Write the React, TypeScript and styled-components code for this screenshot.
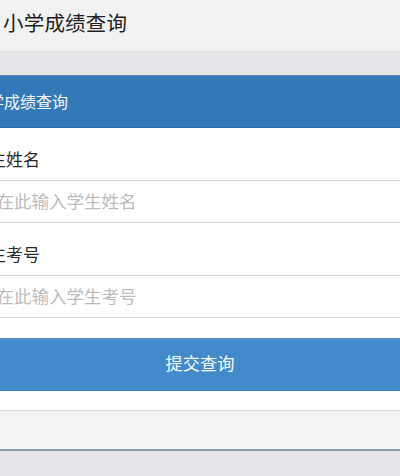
import { createGlobalStyle } from 'styled-components';
import styled from 'styled-components';

const GlobalStyle = createGlobalStyle`
  html, body {
    margin: 0;
    padding: 0;
    background: #e4e6ea;
    overflow: hidden;
  }
  body {
    font-family: "Noto Sans CJK SC", "Noto Sans", sans-serif;
  }
`;

const Page = styled.div`
  width: 400px;
  height: 476px;
  display: flex;
  flex-direction: column;
  background: #e4e6ea;
  overflow: hidden;
`;

const TopBar = styled.header`
  height: 52px;
  background: #f2f2f2;
  display: flex;
  align-items: center;
  padding-left: 3px;
  padding-bottom: 8px;
  box-sizing: border-box;
  border-bottom: 1px solid #e8e8e8;
`;

const Title = styled.h1`
  margin: 0;
  font-size: 20.5px;
  font-weight: 400;
  color: #222;
  letter-spacing: 0.2px;
`;

const Band = styled.div`
  height: 22px;
  background: #e4e6ea;
  box-sizing: border-box;
  border-bottom: 1px solid #efe6e4;
  margin-bottom: 1px;
`;

// the whole form is shifted left, as in the cropped screenshot
const Panel = styled.section`
  display: flex;
  flex-direction: column;
  background: #fff;
  margin-left: -28px;
`;

const PanelHeading = styled.div`
  height: 53px;
  background: #3479b7;
  border-top: 1px solid #5786b3;
  border-bottom: 1px solid #2f6ca3;
  box-sizing: border-box;
  display: flex;
  align-items: center;
  color: #f4f8fc;
  font-size: 16px;
  padding-bottom: 1px;
`;

const Label = styled.label`
  height: 53px;
  box-sizing: border-box;
  padding-top: 19px;
  font-size: 17px;
  line-height: 24px;
  color: #2a2a2a;
  border-bottom: 1px solid #d6d6d6;
`;

const Field = styled.input`
  all: unset;
  height: 42px;
  box-sizing: border-box;
  padding: 0 0 3px 7px;
  font-size: 17.5px;
  line-height: 38px;
  font-family: "Noto Sans CJK SC", "Noto Sans", sans-serif;
  color: #333;
  border-bottom: 1px solid #d6d6d6;
  width: 428px;
  &::placeholder {
    color: #bcbcbc;
  }
`;

const Actions = styled.div`
  padding: 20px 0 19px;
  background: #fff;
  border-bottom: 1px solid #dcdcdc;
`;

const SubmitButton = styled.button`
  width: 100%;
  height: 53px;
  border: none;
  border-top: 2px solid #5a8fc4;
  border-bottom: 1px solid #3a7fc0;
  background: #428aca;
  color: #f7fbff;
  font-family: "Noto Sans CJK SC", "Noto Sans", sans-serif;
  font-size: 17.2px;
  padding: 0 0 5px;
  display: block;
`;

const Footer = styled.div`
  height: 38px;
  background: #f4f4f5;
  border-bottom: 2px solid #8a9ab0;
`;

export default function App() {
  return (
    <>
      <GlobalStyle />
      <Page>
        <TopBar>
          <Title>小学成绩查询</Title>
        </TopBar>
        <Band />
        <Panel>
          <PanelHeading>小学成绩查询</PanelHeading>
          <Label htmlFor="name">学生姓名</Label>
          <Field id="name" placeholder="请在此输入学生姓名" />
          <Label htmlFor="no">学生考号</Label>
          <Field id="no" placeholder="请在此输入学生考号" />
        </Panel>
        <Actions>
          <SubmitButton>提交查询</SubmitButton>
        </Actions>
        <Footer />
      </Page>
    </>
  );
}
